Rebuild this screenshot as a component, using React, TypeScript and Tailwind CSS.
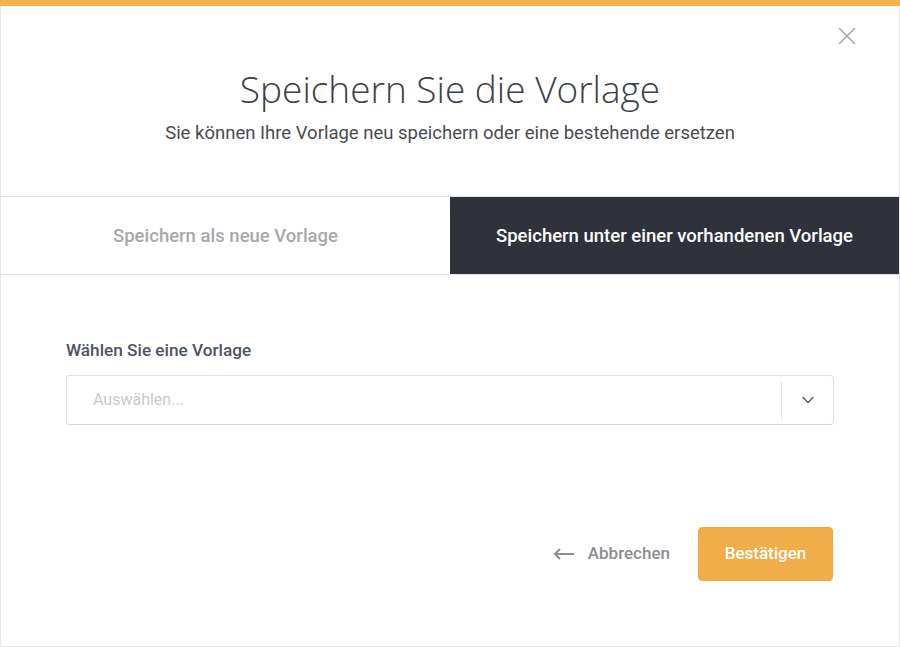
import { X, ChevronDown } from 'lucide-react'

const roboto = { fontFamily: 'Roboto, "Liberation Sans", sans-serif' }

export default function App() {
  return (
    <div className="w-[900px] h-[647px] bg-white flex flex-col overflow-hidden" style={roboto}>
      <div className="h-[6px] bg-[#f4b248] shrink-0" />
      <div className="flex-1 flex flex-col border-x border-b border-[#e6e6e9] relative">
        <button className="absolute top-[15px] right-[37px] text-[#a9a9a9]">
          <X className="h-[30px] w-[30px]" strokeWidth={1.3} />
        </button>

        <div className="pt-[61px] text-center">
          <h1
            className="text-[37px] leading-[44px] font-light text-[#3d4049]"
            style={{ fontFamily: '"Open Sans", "Liberation Sans", sans-serif' }}
          >
            Speichern Sie die Vorlage
          </h1>
          <p className="mt-[10px] text-[18.5px] leading-[24px] text-[#4a4b50]">
            Sie können Ihre Vorlage neu speichern oder eine bestehende ersetzen
          </p>
        </div>

        <div className="mt-[51px] flex h-[79px] border-y border-[#e1e1e6]">
          <button className="flex-1 flex items-center justify-center pt-[2px] text-[18.5px] font-medium text-[#a8a8ab]">
            Speichern als neue Vorlage
          </button>
          <button className="w-[449px] flex items-center justify-center pt-[2px] bg-[#2f323a] text-[18.5px] font-medium text-white">
            Speichern unter einer vorhandenen Vorlage
          </button>
        </div>

        <div className="px-[65px] pt-[65px] flex flex-col">
          <label className="text-[17.2px] leading-[21px] font-medium text-[#4d5266]">Wählen Sie eine Vorlage</label>
          <div className="mt-[14px] h-[50px] flex items-center rounded-[4px] border border-[#e2e2e5] border-b-[#d8d8dc]">
            <span className="flex-1 pl-[26px] text-[16px] text-[#c9c9cc]">Auswählen...</span>
            <span className="h-[37px] w-px bg-[#e2e2e5]" />
            <span className="w-[51px] flex items-center justify-center text-[#5a5d66]">
              <ChevronDown className="h-[20px] w-[20px]" strokeWidth={1.6} />
            </span>
          </div>

          <div className="mt-[102px] flex items-center justify-end pr-px">
            <button className="flex items-center gap-[14px] text-[17px] font-medium text-[#8d8d92]">
              <svg width="21" height="12" viewBox="0 0 21 12" fill="none" stroke="currentColor" strokeWidth="2">
                <path d="M21 6H2M7 1L2 6l5 5" />
              </svg>
              Abbrechen
            </button>
            <button className="ml-[28px] w-[135px] h-[54px] rounded-[4px] bg-[#f2ad4b] border border-[#eca845] text-[17px] font-medium text-white">
              Bestätigen
            </button>
          </div>
        </div>
      </div>
    </div>
  )
}
